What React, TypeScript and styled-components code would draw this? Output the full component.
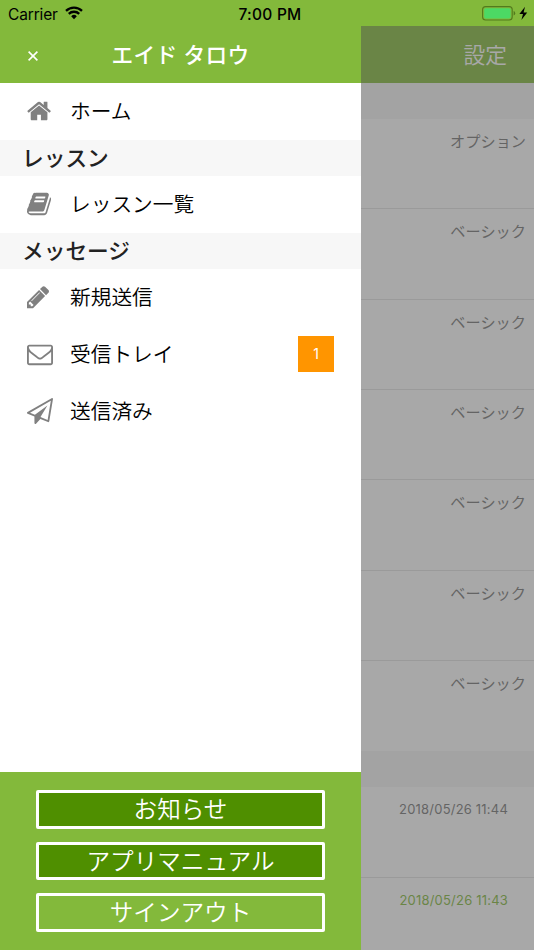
import React from 'react';
import styled, { createGlobalStyle } from 'styled-components';

const GlobalStyle = createGlobalStyle`
  * {
    box-sizing: border-box;
  }

  body {
    margin: 0;
    font-family: Inter, 'Noto Sans CJK JP', sans-serif;
  }
`

const Screen = styled.div`
  display: flex;
  flex-direction: column;
  width: 534px;
  height: 950px;
  overflow: hidden;
  background: #fff;
`

const StatusBar = styled.div`
  display: grid;
  grid-template-columns: 1fr auto 1fr;
  align-items: center;
  flex: none;
  height: 26px;
  padding: 2px 6px 0 8px;
  background: #83b93b;
  color: #000;
  font-size: 15.5px;

  .carrier {
    display: flex;
    align-items: center;
    gap: 7px;
    letter-spacing: -0.15px;
  }

  .carrier svg {
    margin-top: -2px;
  }

  .time {
    font-weight: 500;
    padding-left: 4px;
    letter-spacing: 0.25px;
  }

  .battery {
    display: flex;
    justify-content: flex-end;
  }
`

const Body = styled.div`
  display: flex;
  flex: 1;
  min-height: 0;
`

const Drawer = styled.div`
  display: flex;
  flex-direction: column;
  flex: none;
  width: 361px;
  background: #fff;
`

const DrawerHeader = styled.div`
  display: flex;
  align-items: center;
  justify-content: center;
  position: relative;
  flex: none;
  height: 57px;
  padding-bottom: 3px;
  background: #83b93b;
  color: #fff;
  font-size: 21.7px;
  font-weight: 500;
  letter-spacing: 0.3px;
`

const CloseButton = styled.button`
  position: absolute;
  left: 28px;
  top: 25px;
  display: flex;
  padding: 0;
  border: 0;
  background: none;
`

const MenuRow = styled.div`
  display: flex;
  align-items: center;
  flex: none;
  height: 57px;
  padding: 0 27px 1px;
  color: #000;
  font-size: 20.7px;
  font-weight: 350;

  .icon {
    display: flex;
    width: 43px;
  }

  .label {
    padding-bottom: 2px;
  }
`

const SectionTitle = styled.div`
  flex: none;
  height: 36px;
  padding-left: 22px;
  line-height: 36px;
  background: #f7f7f7;
  color: #222;
  font-size: 21.7px;
  font-weight: 500;
`

const Badge = styled.div`
  width: 36px;
  height: 36px;
  margin-left: auto;
  line-height: 36px;
  text-align: center;
  background: #ff9500;
  color: #fff;
  font-size: 14px;
  font-weight: 400;
`

const DrawerFooter = styled.div`
  display: flex;
  flex-direction: column;
  align-items: center;
  gap: 13px;
  height: 178px;
  margin-top: auto;
  padding-top: 18px;
  background: #83b93b;
`

const FooterButton = styled.button<{ $filled?: boolean }>`
  display: flex;
  align-items: center;
  justify-content: center;
  width: 289px;
  height: 38.6px;
  padding: 0 0 2px;
  border: 3px solid #fff;
  border-radius: 2px;
  background: ${(props) => (props.$filled ? '#4f8f00' : 'transparent')};
  color: #fff;
  font-family: inherit;
  font-size: 23.6px;
  font-weight: 350;
`

const Page = styled.div`
  position: relative;
  flex: 1;
  background: #fff;
`

const PageHeader = styled.div`
  height: 57px;
  padding-right: 27px;
  line-height: 58px;
  text-align: right;
  background: #83b93b;
  color: #fff;
  font-size: 21.7px;
  font-weight: 350;
`

const Divider = styled.div`
  height: 36px;
  background: #f5f5f5;
`

const ListRow = styled.div<{ $color?: string; $date?: boolean }>`
  height: 90.33px;
  padding: ${(props) => (props.$date ? '14px 26px 0 0' : '11px 8px 0 0')};
  border-bottom: 1px solid #e2e2e2;
  text-align: right;
  color: ${(props) => props.$color || '#777'};
  font-size: ${(props) => (props.$date ? '13px' : '15.2px')};
  line-height: ${(props) => (props.$date ? '16px' : '24px')};
  letter-spacing: ${(props) => (props.$date ? '0.2px' : '0')};

  &.last {
    border-bottom: 0;
  }
`

const Dim = styled.div`
  position: absolute;
  inset: 0;
  background: rgba(82, 82, 82, 0.5);
`

const icons = {
  home: {
    x: 64,
    width: 1664,
    d: 'M1472 992v480q0 26-19 45t-45 19h-384v-384h-256v384h-384q-26 0-45-19t-19-45v-480q0-1 .5-3t.5-3l575-474 575 474q1 2 1 6zm223-69l-62 74q-8 9-21 11h-3q-13 0-21-7l-692-577-692 577q-12 8-24 7-13-2-21-11l-62-74q-8-10-7-23.5t11-21.5l719-599q32-26 76-26t76 26l244 204v-195q0-14 9-23t23-9h192q14 0 23 9t9 23v408l219 182q10 8 11 21.5t-7 23.5z',
  },
  book: {
    x: 64,
    width: 1664,
    d: 'M1703 478q40 57 18 129l-275 906q-19 64-76.5 107.5t-122.5 43.5h-923q-77 0-148.5-53.5t-99.5-131.5q-24-67-2-127 0-4 3-27t4-37q1-8-3-21.5t-3-19.5q2-11 8-21t16.5-23.5 16.5-23.5q23-38 45-91.5t30-91.5q3-10 .5-30t-.5-28q3-11 17-28t17-23q21-36 42-92t25-90q1-9-2.5-32t.5-28q4-13 22-30.5t22-22.5q19-26 42.5-84.5t27.5-96.5q1-8-3-25.5t-2-26.5q2-8 9-18t18-23 17-21q8-12 16.5-30.5t15-35 16-36 19.5-32 26.5-23.5 36-11.5 47.5 5.5l-1 3q38-9 51-9h761q74 0 114 56t18 130l-274 906q-36 119-71.5 153.5t-128.5 34.5h-869q-27 0-38 15-11 16-1 43 24 70 144 70h923q29 0 56-15.5t35-41.5l300-987q7-22 5-57 38 15 59 43zm-1064 2q-4 13 2 22.5t20 9.5h608q13 0 25.5-9.5t16.5-22.5l21-64q4-13-2-22.5t-20-9.5h-608q-13 0-25.5 9.5t-16.5 22.5zm-83 256q-4 13 2 22.5t20 9.5h608q13 0 25.5-9.5t16.5-22.5l21-64q4-13-2-22.5t-20-9.5h-608q-13 0-25.5 9.5t-16.5 22.5z',
  },
  pencil: {
    x: 128,
    width: 1536,
    d: 'M491 1536l91-91-235-235-91 91v107h128v128h107zm523-928q0-22-22-22-10 0-17 7l-542 542q-7 7-7 17 0 22 22 22 10 0 17-7l542-542q7-7 7-17zm-54-192l416 416-832 832h-416v-416zm683 96q0 53-37 90l-166 166-416-416 166-165q36-38 90-38 53 0 91 38l235 234q37 39 37 91z',
  },
  envelope: {
    x: 0,
    width: 1792,
    d: 'M1664 1504v-768q-32 36-69 66-268 206-426 338-51 43-83 67t-86.5 48.5-102.5 24.5h-2q-48 0-102.5-24.5t-86.5-48.5-83-67q-158-132-426-338-37-30-69-66v768q0 13 9.5 22.5t22.5 9.5h1472q13 0 22.5-9.5t9.5-22.5zm0-1051v-24.5l-.5-13-3-12.5-5.5-9-9-7.5-14-2.5h-1472q-13 0-22.5 9.5t-9.5 22.5q0 168 147 284 193 152 401 317 6 5 35 29.5t46 37.5 44.5 31.5 50.5 27.5 43 9h2q20 0 43-9t50.5-27.5 44.5-31.5 46-37.5 35-29.5q208-165 401-317 54-43 100.5-115.5t46.5-131.5zm128-37v1088q0 66-47 113t-113 47h-1472q-66 0-113-47t-47-113v-1088q0-66 47-113t113-47h1472q66 0 113 47t47 113z',
  },
  plane: {
    x: 0,
    width: 1792,
    d: 'M1764 11q33 24 27 64l-256 1536q-5 29-32 45-14 8-31 8-11 0-24-5l-527-215-298 327q-18 21-47 21-14 0-23-4-19-7-30-23.5t-11-36.5v-452l-472-193q-37-14-40-55-3-39 32-59l1664-960q35-21 68 2zm-342 1499l221-1323-1434 827 336 137 863-639-478 797z',
  },
};

function Icon({ name }: { name: keyof typeof icons }) {
  const icon = icons[name];
  return (
    <svg
      width={(icon.width * 26) / 1792}
      height="26"
      viewBox={`${icon.x} 0 ${icon.width} 1792`}
      fill="#808080"
    >
      <path d={icon.d} />
    </svg>
  );
}

function MenuItem({ icon, label, count }: { icon: keyof typeof icons; label: string; count?: number }) {
  return (
    <MenuRow>
      <div className='icon'><Icon name={icon} /></div>
      <div className='label'>{label}</div>
      {count && <Badge>{count}</Badge>}
    </MenuRow>
  );
}

const plans = ['オプション', 'ベーシック', 'ベーシック', 'ベーシック', 'ベーシック', 'ベーシック', 'ベーシック'];

function App() {
  return (
    <Screen>
      <GlobalStyle />
      <StatusBar>
        <div className='carrier'>
          <span>Carrier</span>
          <svg width="18" height="14" viewBox="0 0 18 14" fill="none" stroke="#000" strokeWidth="2.3">
            <path d="M1 4.9A11.4 11.4 0 0 1 17 4.9" />
            <path d="M3.8 7.9A7.4 7.4 0 0 1 14.2 7.9" />
            <path d="M6.2 10.2L9 13.2L11.8 10.2A4 4 0 0 0 6.2 10.2Z" fill="#000" stroke="none" />
          </svg>
        </div>
        <div className='time'>7:00 PM</div>
        <div className='battery'>
          <svg width="46" height="16" viewBox="0 0 46 16">
            <rect x="0.6" y="0.6" width="29.6" height="13.4" rx="3" fill="none" stroke="#527a1d" strokeWidth="1.1" />
            <rect x="2.2" y="2.2" width="26.4" height="10.2" rx="1.6" fill="#4cd964" />
            <path d="M31.6 5Q33.2 5.6 33.2 7.3T31.6 9.6Z" fill="#527a1d" />
            <path d="M43 0.8L37.4 8H41L39.4 14L45.2 6.4H41.6Z" fill="#000" />
          </svg>
        </div>
      </StatusBar>
      <Body>
        <Drawer>
          <DrawerHeader>
            <CloseButton aria-label="close">
              <svg width="10" height="10" viewBox="0 0 10 10" stroke="#fff" strokeWidth="1.6">
                <path d="M0.6 0.6L9.4 9.4M9.4 0.6L0.6 9.4" />
              </svg>
            </CloseButton>
            エイド タロウ
          </DrawerHeader>
          <MenuItem icon="home" label="ホーム" />
          <SectionTitle>レッスン</SectionTitle>
          <MenuItem icon="book" label="レッスン一覧" />
          <SectionTitle>メッセージ</SectionTitle>
          <MenuItem icon="pencil" label="新規送信" />
          <MenuItem icon="envelope" label="受信トレイ" count={1} />
          <MenuItem icon="plane" label="送信済み" />
          <DrawerFooter>
            <FooterButton $filled>お知らせ</FooterButton>
            <FooterButton $filled>アプリマニュアル</FooterButton>
            <FooterButton>サインアウト</FooterButton>
          </DrawerFooter>
        </Drawer>
        <Page>
          <PageHeader>設定</PageHeader>
          <Divider />
          {plans.map((plan, i) => (
            <ListRow key={i} className={i === plans.length - 1 ? 'last' : ''}>{plan}</ListRow>
          ))}
          <Divider />
          <ListRow $date>2018/05/26 11:44</ListRow>
          <ListRow $date $color="#83b93b" className='last'>2018/05/26 11:43</ListRow>
          <Dim />
        </Page>
      </Body>
    </Screen>
  );
}

export default App;
